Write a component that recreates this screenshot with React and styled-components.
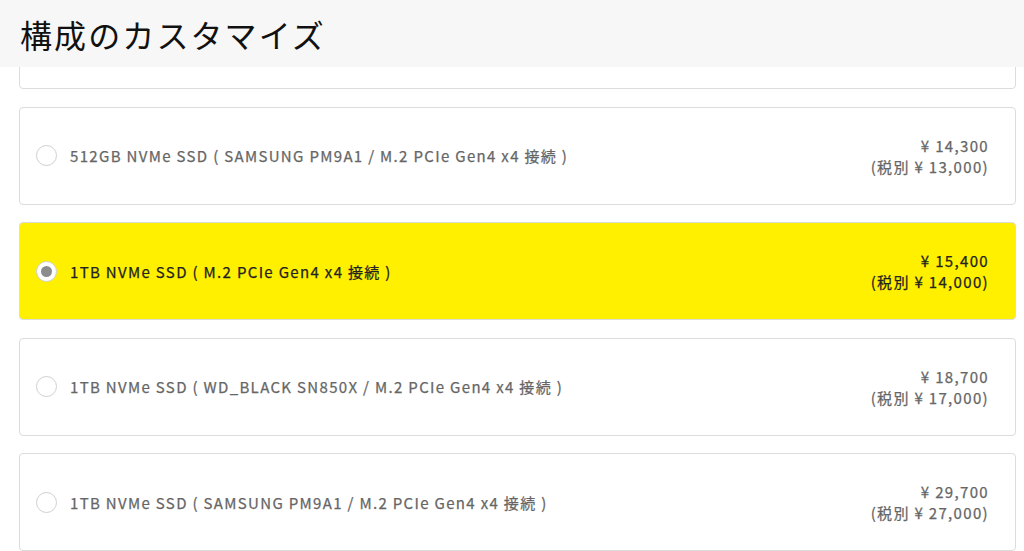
import React from 'react'
import styled, { createGlobalStyle } from 'styled-components'

const GlobalStyle = createGlobalStyle`
    html, body {
        margin: 0;
        padding: 0;
        background: #fff;
        font-family: "Noto Sans CJK JP", "Noto Sans", sans-serif;
    }
`

const Page = styled.div`
    width: 1024px;
    height: 551px;
    overflow: hidden;
    display: flex;
    flex-direction: column;
`
const Header = styled.div`
    height: 67px;
    flex: none;
    background-color: #f7f7f7;
    display: flex;
    align-items: center;
    padding-left: 20px;
`
const Title = styled.h1`
    margin: 0;
    font-size: 32px;
    font-weight: 400;
    letter-spacing: 2.1px;
    color: #111;
`
const Viewport = styled.div`
    flex: 1;
    overflow: hidden;
`
const List = styled.div`
    display: flex;
    flex-direction: column;
    gap: 17.5px;
    margin: -76px 8px 0 19px;
`
const Card = styled.label`
    height: 98px;
    box-sizing: border-box;
    border: 1px solid #dcdcdc;
    border-radius: 4px;
    background-color: ${props => props.selected ? '#fff000' : '#fff'};
    color: ${props => props.selected ? '#222' : '#666'};
    display: flex;
    align-items: center;
    padding: 0 27px 0 16px;
    font-size: 15px;
    font-weight: 400;
    letter-spacing: 1.33px;
    -webkit-text-stroke: 0.25px currentColor;
`
const Radio = styled.span`
    width: 21px;
    height: 21px;
    box-sizing: border-box;
    border-radius: 50%;
    border: 1px solid #cfcfcf;
    background-color: #fff;
    display: flex;
    align-items: center;
    justify-content: center;
    margin-right: 13px;
    flex: none;

    &::after {
        content: '';
        width: 11px;
        height: 11px;
        border-radius: 50%;
        background-color: ${props => props.checked ? '#8c8c8c' : 'transparent'};
    }
`
const Name = styled.div`
    flex: 1;
`
const Price = styled.div`
    text-align: right;
    line-height: 21px;
    margin-right: -1px;
`

const options = [
    { name: '512GB NVMe SSD ( SAMSUNG PM9A1 / M.2 PCIe Gen4 x4 接続 )', price: '14,300', net: '13,000' },
    { name: '1TB NVMe SSD ( M.2 PCIe Gen4 x4 接続 )', price: '15,400', net: '14,000', selected: true },
    { name: '1TB NVMe SSD ( WD_BLACK SN850X / M.2 PCIe Gen4 x4 接続 )', price: '18,700', net: '17,000' },
    { name: '1TB NVMe SSD ( SAMSUNG PM9A1 / M.2 PCIe Gen4 x4 接続 )', price: '29,700', net: '27,000' },
]

const App = () => {
    return (
        <Page>
            <GlobalStyle />
            <Header>
                <Title>構成のカスタマイズ</Title>
            </Header>
            <Viewport>
                <List>
                    <Card />
                    {options.map(o => (
                        <Card key={o.name} selected={o.selected}>
                            <Radio checked={o.selected} />
                            <Name>{o.name}</Name>
                            <Price>
                                ¥ {o.price}<br />
                                (税別 ¥ {o.net})
                            </Price>
                        </Card>
                    ))}
                </List>
            </Viewport>
        </Page>
    )
}

export default App
